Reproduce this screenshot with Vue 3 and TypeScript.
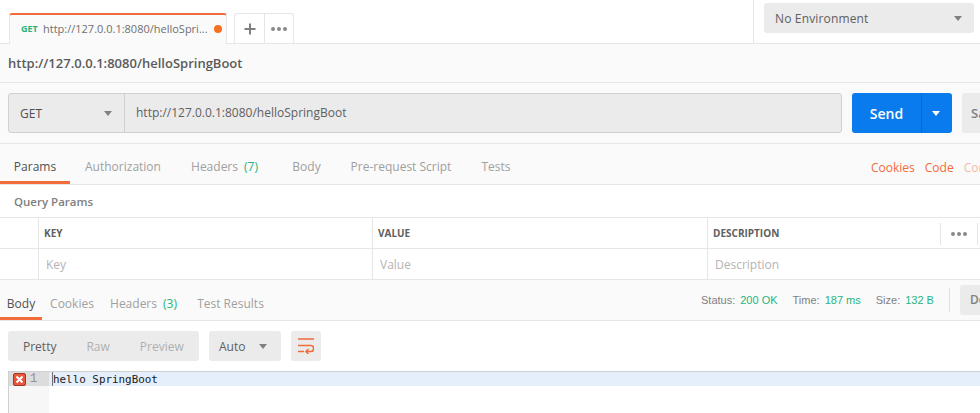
<template>
  <div class="app">
    <div class="topbar">
      <div class="tabs">
        <div class="tab">
          <span class="tab-method">GET</span>
          <span class="tab-url">http://127.0.0.1:8080/helloSpri...</span>
          <span class="tab-dot"></span>
        </div>
        <div class="tab-actions">
          <div class="tab-add">
            <svg width="16" height="16" viewBox="0 0 16 16"><path d="M8 2.5v11M2.5 8h11" stroke="#808080" stroke-width="2" /></svg>
          </div>
          <div class="tab-more">
            <span v-for="n in 3" :key="n" class="dot"></span>
          </div>
        </div>
      </div>
      <div class="env-wrap">
        <div class="env">
          <span>No Environment</span>
          <span class="caret"></span>
        </div>
      </div>
    </div>

    <div class="name-row">http://127.0.0.1:8080/helloSpringBoot</div>

    <div class="url-row">
      <div class="url-group">
        <div class="method">
          <span>GET</span>
          <span class="caret"></span>
        </div>
        <div class="url-input">http://127.0.0.1:8080/helloSpringBoot</div>
      </div>
      <div class="send">
        <span class="send-label">Send</span>
        <span class="send-drop"><span class="caret white"></span></span>
      </div>
      <div class="save">Save</div>
    </div>

    <div class="req-tabs">
      <div class="tab-list">
        <span
          v-for="t in reqTabs"
          :key="t.label"
          class="req-tab"
          :class="{ active: t.active }"
          :style="{ width: t.width + 'px' }"
        >{{ t.label }}<em v-if="t.count">({{ t.count }})</em></span>
      </div>
      <div class="links">
        <span>Cookies</span>
        <span>Code</span>
        <span class="faded">Comments</span>
      </div>
    </div>

    <div class="query-title">Query Params</div>
    <div class="params">
      <div class="cell"></div>
      <div class="cell head">KEY</div>
      <div class="cell head">VALUE</div>
      <div class="cell head desc-head">
        <span>DESCRIPTION</span>
        <span class="head-more"><span v-for="n in 3" :key="n" class="dot"></span></span>
      </div>
      <div class="cell"></div>
      <div class="cell hint">Key</div>
      <div class="cell hint">Value</div>
      <div class="cell hint">Description</div>
    </div>

    <div class="res-tabs">
      <div class="tab-list">
        <span
          v-for="t in resTabs"
          :key="t.label"
          class="res-tab"
          :class="{ active: t.active }"
          :style="{ width: t.width + 'px' }"
        >{{ t.label }}<em v-if="t.count">({{ t.count }})</em></span>
      </div>
      <div class="status">
        <span>Status:</span><b>200 OK</b>
        <span>Time:</span><b>187 ms</b>
        <span>Size:</span><b>132 B</b>
        <i class="status-sep"></i>
        <div class="download">Download</div>
      </div>
    </div>

    <div class="toolbar">
      <div class="views">
        <span class="on">Pretty</span>
        <span>Raw</span>
        <span>Preview</span>
      </div>
      <div class="auto">
        <span>Auto</span>
        <span class="caret"></span>
      </div>
      <div class="wrap-btn">
        <svg width="16" height="16" viewBox="0 0 16 16" fill="none" stroke="#f26b3a" stroke-width="1.6">
          <path d="M0 1h16M0 7.5h13a2.6 3 0 0 1 0 6H8M0 13.5h6" />
          <path d="M10.5 11 8 13.5l2.5 2.5" />
        </svg>
      </div>
    </div>

    <div class="editor">
      <div class="gutter">
        <div class="gutter-line">
          <svg class="err" width="13" height="13" viewBox="0 0 13 13">
            <rect x="0.5" y="0.5" width="12" height="12" rx="1.5" fill="#e8553a" stroke="#a33a22" />
            <path d="M3.5 3.5l6 6M9.5 3.5l-6 6" stroke="#fff" stroke-width="2" />
          </svg>
          <span>1</span>
        </div>
      </div>
      <div class="code">
        <div class="code-line"><span class="cursor"></span>hello SpringBoot</div>
      </div>
    </div>
  </div>
</template>

<script setup lang="ts">
interface TabItem {
  label: string
  width: number
  active?: boolean
  count?: number
}

const reqTabs: TabItem[] = [
  { label: 'Params', width: 70, active: true },
  { label: 'Authorization', width: 106 },
  { label: 'Headers', width: 97, count: 7 },
  { label: 'Body', width: 67 },
  { label: 'Pre-request Script', width: 122 },
  { label: 'Tests', width: 68 },
]

const resTabs: TabItem[] = [
  { label: 'Body', width: 42, active: true },
  { label: 'Cookies', width: 60 },
  { label: 'Headers', width: 83, count: 3 },
  { label: 'Test Results', width: 91 },
]
</script>

<style>
html,
body {
  margin: 0;
  overflow: hidden;
  background: #fff;
}
</style>

<style scoped>
.app {
  width: 980px;
  height: 413px;
  overflow: hidden;
  font-family: "Open Sans", "DejaVu Sans", sans-serif;
  font-size: 12px;
  color: #505050;
  background: #fff;
}
.topbar {
  display: flex;
  justify-content: space-between;
  height: 44px;
  box-sizing: border-box;
  border-bottom: 1px solid #e6e6e6;
}
.tabs {
  display: flex;
  padding: 13px 0 0 9px;
}
.tab {
  display: flex;
  align-items: center;
  width: 218px;
  height: 31px;
  box-sizing: border-box;
  padding: 0 4px 2px 11px;
  background: #fafafa;
  border: 1px solid #e6e6e6;
  border-top: 2px solid #f26b3a;
  border-bottom: 0;
  border-radius: 3px 3px 0 0;
  margin-bottom: -1px;
}
.tab-method {
  flex: none;
  font-size: 9px;
  font-weight: 700;
  color: #26b47f;
  width: 22px;
}
.tab-url {
  flex: 1;
  font-size: 11px;
  color: #707070;
  white-space: nowrap;
}
.tab-dot {
  flex: none;
  width: 8px;
  height: 8px;
  border-radius: 50%;
  background: #f8701f;
}
.tab-actions {
  display: flex;
  height: 30px;
  margin-left: 7px;
  box-sizing: border-box;
  border: 1px solid #e6e6e6;
  border-bottom: 0;
  border-radius: 3px 3px 0 0;
}
.tab-add {
  width: 29px;
  display: flex;
  align-items: center;
  justify-content: center;
  border-right: 1px solid #e6e6e6;
}
.tab-more {
  width: 28px;
  display: flex;
  align-items: center;
  justify-content: center;
  gap: 2px;
}
.dot {
  width: 4px;
  height: 4px;
  border-radius: 50%;
  background: #8a8a8a;
}
.env-wrap {
  width: 227px;
  box-sizing: border-box;
  padding: 3px 6px 0 10px;
  border-left: 1px solid #e6e6e6;
}
.env {
  display: flex;
  align-items: center;
  justify-content: space-between;
  height: 30px;
  box-sizing: border-box;
  padding: 0 12px 0 11px;
  background: #ebebeb;
  border-radius: 3px;
  font-size: 12px;
  letter-spacing: 0.15px;
  color: #606060;
}
.caret {
  width: 0;
  height: 0;
  border-left: 4px solid transparent;
  border-right: 4px solid transparent;
  border-top: 5px solid #808080;
}
.caret.white {
  border-top-color: #fff;
}
.name-row {
  height: 39px;
  box-sizing: border-box;
  padding-left: 8px;
  line-height: 38px;
  background: #fafafa;
  border-bottom: 1px solid #e6e6e6;
  font-size: 13px;
  font-weight: 600;
  color: #5a5a5a;
}
.url-row {
  display: flex;
  height: 61px;
  box-sizing: border-box;
  padding: 10px 0 0 8px;
  background: #fafafa;
  border-bottom: 1px solid #e6e6e6;
}
.url-group {
  display: flex;
  width: 834px;
  height: 40px;
  box-sizing: border-box;
  background: #ebebeb;
  border: 1px solid #d0d0d0;
  border-radius: 3px;
  flex: none;
}
.method {
  display: flex;
  align-items: center;
  justify-content: space-between;
  width: 116px;
  box-sizing: border-box;
  padding: 0 12px 0 11px;
  border-right: 1px solid #d0d0d0;
  font-size: 12px;
  color: #505050;
}
.url-input {
  flex: 1;
  padding-left: 11px;
  line-height: 38px;
  font-size: 12px;
  color: #606060;
}
.send {
  display: flex;
  flex: none;
  width: 100px;
  height: 40px;
  margin-left: 10px;
  border-radius: 3px;
  background: #097bed;
  color: #fff;
  font-size: 14px;
  font-weight: 600;
}
.send-label {
  flex: 1;
  text-align: center;
  line-height: 41px;
}
.send-drop {
  display: flex;
  align-items: center;
  justify-content: center;
  width: 31px;
  padding-right: 2px;
  box-sizing: border-box;
  border-left: 1px solid #0868cc;
}
.save {
  flex: none;
  width: 90px;
  height: 40px;
  margin-left: 10px;
  padding-left: 9px;
  box-sizing: border-box;
  line-height: 41px;
  border-radius: 3px;
  background: #ebebeb;
  color: #808080;
  font-size: 13px;
  font-weight: 600;
}
.req-tabs {
  display: flex;
  justify-content: space-between;
  height: 41px;
  box-sizing: border-box;
  background: #fafafa;
  border-bottom: 1px solid #e6e6e6;
}
.tab-list {
  display: flex;
}
.req-tab,
.res-tab {
  display: block;
  flex: none;
  box-sizing: border-box;
  font-size: 12px;
  color: #a0a0a0;
  white-space: nowrap;
  text-align: center;
  height: 100%;
}
.req-tab {
  line-height: 45px;
}
.res-tab {
  line-height: 47px;
}
.req-tab em,
.res-tab em {
  font-style: normal;
  color: #26b47f;
  margin-left: 6px;
}
.req-tab.active,
.res-tab.active {
  color: #505050;
  border-bottom: 3px solid #f26b3a;
}
.links {
  display: flex;
  gap: 10px;
  width: 109px;
  overflow: hidden;
  white-space: nowrap;
  line-height: 48px;
  font-size: 12px;
  color: #f26b3a;
  flex: none;
}
.faded {
  opacity: 0.45;
}
.query-title {
  height: 32px;
  box-sizing: border-box;
  padding-left: 14px;
  line-height: 34px;
  font-size: 11.5px;
  font-weight: 600;
  color: #808080;
}
.params {
  display: grid;
  grid-template-columns: 39px 334px 335px 1fr;
  grid-template-rows: 31px 31px;
  border-top: 1px solid #e6e6e6;
  box-sizing: border-box;
  height: 63px;
}
.cell {
  box-sizing: border-box;
  border-right: 1px solid #e6e6e6;
  border-bottom: 1px solid #e6e6e6;
  padding-left: 5px;
  line-height: 30px;
}
.head {
  font-size: 10px;
  font-weight: 700;
  color: #606060;
}
.desc-head {
  display: flex;
  justify-content: space-between;
  border-right: 0;
}
.head-more {
  display: flex;
  align-items: center;
  justify-content: center;
  gap: 2px;
  width: 38px;
  height: 22px;
  box-sizing: border-box;
  margin: 5px 2px 0 0;
  border-left: 1px solid #e6e6e6;
  border-right: 1px solid #e6e6e6;
}
.hint {
  font-size: 12px;
  line-height: 31px;
  color: #b4b4b4;
  padding-left: 7px;
}
.cell:last-child {
  border-right: 0;
}
.res-tabs {
  display: flex;
  justify-content: space-between;
  height: 41px;
  box-sizing: border-box;
  background: #fafafa;
  border-bottom: 1px solid #e6e6e6;
}
.status {
  display: flex;
  align-items: center;
  flex: none;
  width: 279px;
  box-sizing: border-box;
  overflow: hidden;
  font-family: "Liberation Sans", Arial, sans-serif;
  font-size: 11px;
  color: #808080;
  white-space: nowrap;
}
.status b {
  font-weight: 400;
  color: #26b47f;
  margin: 0 15px 0 5px;
}
.status-sep {
  flex: none;
  width: 1px;
  height: 24px;
  background: #e0e0e0;
  margin-right: 10px;
}
.download {
  flex: none;
  width: 70px;
  height: 30px;
  line-height: 30px;
  padding-left: 10px;
  box-sizing: border-box;
  border-radius: 3px;
  background: #ebebeb;
  font-family: "Open Sans", sans-serif;
  font-size: 12px;
  font-weight: 600;
  color: #808080;
}
.toolbar {
  display: flex;
  gap: 10px;
  height: 50px;
  box-sizing: border-box;
  padding: 10px 0 0 8px;
}
.views,
.auto,
.wrap-btn {
  height: 30px;
  background: #ebebeb;
  border-radius: 3px;
  box-sizing: border-box;
  display: flex;
  align-items: center;
}
.views {
  width: 191px;
  padding: 1px 0 0 15px;
  gap: 30px;
  color: #b0b0b0;
  font-size: 12px;
}
.views .on {
  color: #606060;
}
.auto {
  width: 72px;
  padding: 1px 14px 0 10px;
  justify-content: space-between;
  color: #606060;
  font-size: 12px;
}
.wrap-btn {
  width: 30px;
  justify-content: center;
}
.editor {
  display: flex;
  margin-left: 8px;
  height: 42px;
  border-top: 1px solid #d0d0d0;
  border-left: 1px solid #d0d0d0;
}
.gutter {
  width: 40px;
  flex: none;
  background: #f7f7f7;
}
.gutter-line {
  display: flex;
  align-items: center;
  height: 14px;
  padding-left: 4px;
  gap: 4px;
  background: #dcdcdc;
  font-family: "Liberation Mono", monospace;
  font-size: 12px;
  color: #909090;
}
.err {
  flex: none;
  margin-top: 1px;
}
.code {
  flex: 1;
}
.code-line {
  position: relative;
  height: 14px;
  padding-left: 4px;
  line-height: 15px;
  background: #e4effb;
  font-family: "DejaVu Sans Mono", "Liberation Mono", monospace;
  font-size: 10.9px;
  color: #202020;
  white-space: pre;
}
.cursor {
  position: absolute;
  left: 3px;
  top: 0;
  width: 1px;
  height: 14px;
  background: #707070;
}
</style>
